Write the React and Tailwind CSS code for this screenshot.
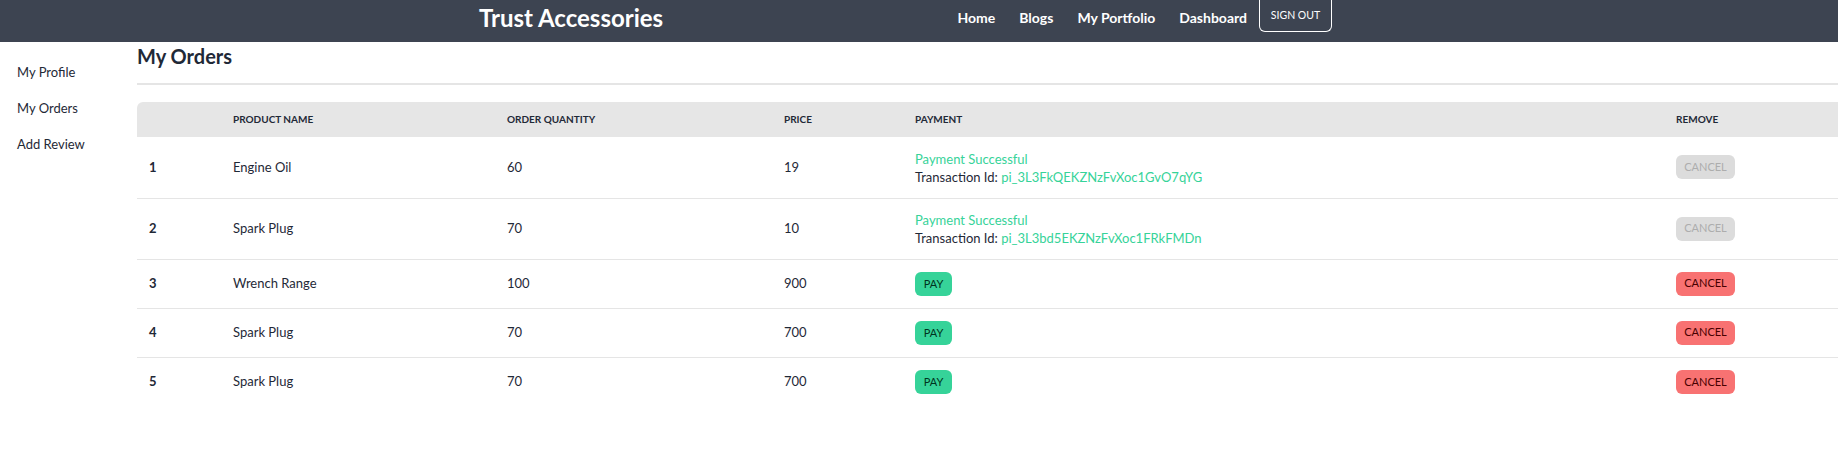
import React from 'react';

const orders = [
  { id: 1, name: 'Engine Oil', qty: 60, price: 19, paid: true, tx: 'pi_3L3FkQEKZNzFvXoc1GvO7qYG' },
  { id: 2, name: 'Spark Plug', qty: 70, price: 10, paid: true, tx: 'pi_3L3bd5EKZNzFvXoc1FRkFMDn' },
  { id: 3, name: 'Wrench Range', qty: 100, price: 900, paid: false },
  { id: 4, name: 'Spark Plug', qty: 70, price: 700, paid: false },
  { id: 5, name: 'Spark Plug', qty: 70, price: 700, paid: false },
];

function Navbar() {
  return (
    <div className="flex items-center h-[42px] pb-[7px] bg-[#3d4451] text-white">
      <a className="ml-[479px] text-[24px] font-bold leading-none">Trust Accessories</a>
      <ul className="ml-auto flex items-center text-[14px] font-bold">
        <li className="px-3">Home</li>
        <li className="px-3">Blogs</li>
        <li className="px-3">My Portfolio</li>
        <li className="px-3">Dashboard</li>
      </ul>
      <button className="self-start mr-[506px] h-[32px] w-[73px] pt-[1px] rounded-b-md border border-t-0 border-white text-[10.5px] text-white">
        SIGN OUT
      </button>
    </div>
  );
}

function Sidebar() {
  return (
    <ul className="w-[137px] shrink-0 pt-[13px] pl-[17px] text-[13px] text-[#1f2937]">
      <li className="h-9 flex items-center">My Profile</li>
      <li className="h-9 flex items-center">My Orders</li>
      <li className="h-9 flex items-center">Add Review</li>
    </ul>
  );
}

function MyOrders() {
  return (
    <div className="flex-1 min-w-0">
      <h2 className="text-[20px] font-bold leading-[28px] text-[#1f2937]">My Orders</h2>
      <div className="mt-[13px] h-[2px] bg-[#e5e5e5]" />
      <div className="mt-[17px] overflow-x-auto">
        <table className="w-full table-fixed text-left text-[13px] text-[#1f2937]">
          <thead className="text-[10px] font-bold uppercase">
            <tr className="h-[35px] bg-[#e6e6e6]">
              <th className="w-[84px] pl-3 rounded-tl-md"></th>
              <th className="w-[274px] pl-3">Product Name</th>
              <th className="w-[277px] pl-3">Order Quantity</th>
              <th className="w-[131px] pl-3">Price</th>
              <th className="w-[761px] pl-3">Payment</th>
              <th className="pl-3">Remove</th>
            </tr>
          </thead>
          <tbody>
            {orders.map((o, i) => (
              <tr
                key={o.id}
                className={`${o.paid ? 'h-[61px]' : 'h-[49px]'} ${i < orders.length - 1 ? 'border-b border-[#e5e5e5]' : ''}`}
              >
                <th className="pl-3 font-bold">{o.id}</th>
                <td className="pl-3">{o.name}</td>
                <td className="pl-3">{o.qty}</td>
                <td className="pl-3">{o.price}</td>
                <td className="pl-3 leading-[18px]">
                  {o.paid ? (
                    <div className="pt-[1px]">
                      <p className="text-[#36d399]">Payment Successful</p>
                      <p>
                        Transaction Id: <span className="text-[#36d399]">{o.tx}</span>
                      </p>
                    </div>
                  ) : (
                    <button className="h-[24px] w-[37px] rounded-md bg-[#36d399] text-[11px] text-[#003320]">PAY</button>
                  )}
                </td>
                <td className="pl-3">
                  {o.paid ? (
                    <button disabled className="h-[24px] w-[59px] rounded-md bg-[#dcdcdc] text-[11px] text-[#adadad]">CANCEL</button>
                  ) : (
                    <button className="h-[24px] w-[59px] rounded-md bg-[#f87272] text-[11px] text-[#470000]">CANCEL</button>
                  )}
                </td>
              </tr>
            ))}
          </tbody>
        </table>
      </div>
    </div>
  );
}

export default function App() {
  return (
    <div className="min-h-[474px] bg-white font-['Lato',sans-serif]">
      <Navbar />
      <div className="flex">
        <Sidebar />
        <MyOrders />
      </div>
    </div>
  );
}
